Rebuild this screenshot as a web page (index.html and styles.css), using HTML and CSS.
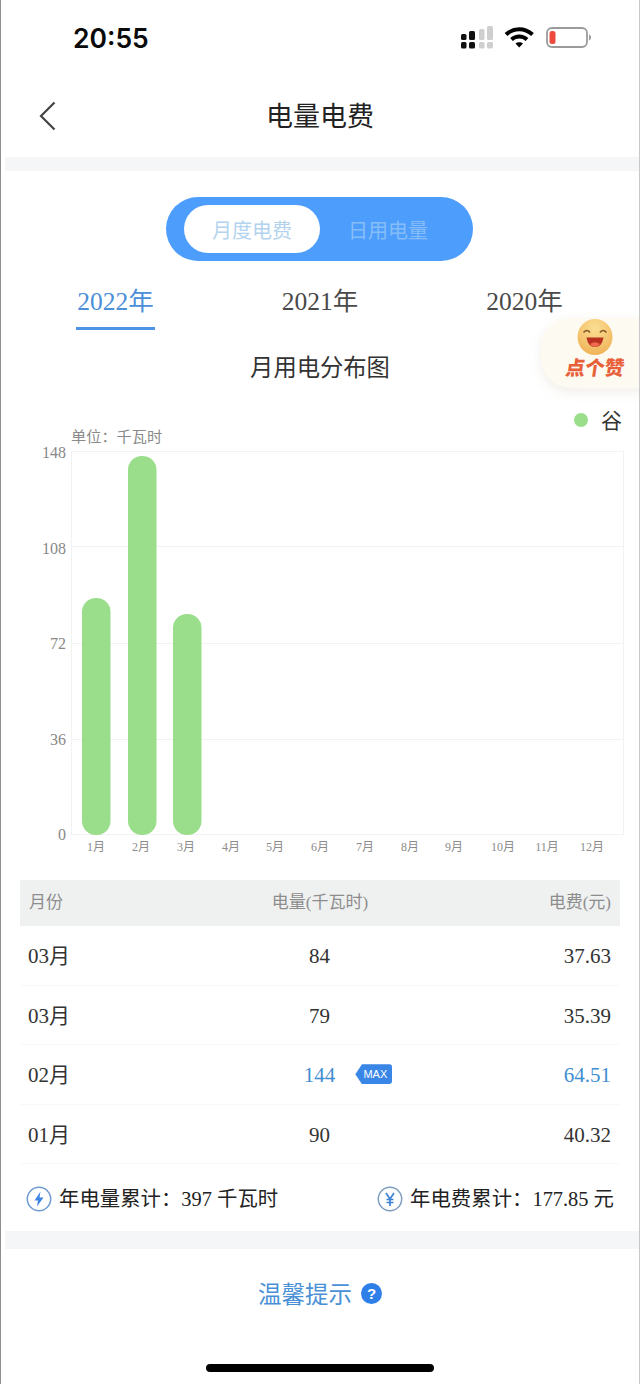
FILE: index.html
```html
<!DOCTYPE html>
<html lang="zh-CN">
<head>
<meta charset="utf-8">
<title>电量电费</title>
<link rel="stylesheet" href="styles.css">
</head>
<body>
<div class="phone">
  <div class="status">
    <span class="time">20:55</span>
    <svg class="status-icons" width="132" height="26" viewBox="0 0 132 26">
      <g fill="#111">
        <rect x="2" y="9" width="5.5" height="6" rx="1.5"/><rect x="2" y="17" width="5.5" height="6.5" rx="1.5"/>
        <rect x="10" y="6" width="6" height="9" rx="1.5"/><rect x="10" y="17" width="6" height="6.5" rx="1.5"/>
      </g>
      <g fill="#cfcfcf">
        <rect x="20" y="4" width="5.5" height="11" rx="1.5"/><rect x="20" y="17" width="5.5" height="6.5" rx="1.5"/>
        <rect x="28" y="1" width="6" height="14" rx="1.5"/><rect x="28" y="17" width="6" height="6.5" rx="1.5"/>
      </g>
      <g fill="none" stroke="#000" stroke-width="4">
        <path d="M47 9.5C55 2.5 65.5 2.500 73.500 9.500"/>
        <path d="M52.500 14.500C57 10.500 63.500 10.500 68 14.500"/>
      </g>
      <path d="M56.500 18.500C58.500 16.700 62 16.700 64 18.500L60.200 22.500Z" fill="#000"/>
      <rect x="88" y="3" width="40" height="19" rx="5" fill="#fff" stroke="#9a9a9a" stroke-width="1.800"/>
      <rect x="90.500" y="6" width="6" height="13" rx="2.500" fill="#ee4b3e"/>
      <path d="M130 9.500C131.500 10 132 11.500 132 12.500S131.500 15 130 15.500Z" fill="#9a9a9a"/>
    </svg>
  </div>

  <header class="nav">
    <svg class="back" width="18" height="30" viewBox="0 0 18 30"><path d="M15.500 1.500L2 15L15.500 28.500" fill="none" stroke="#444" stroke-width="2.200"/></svg>
    <h1 class="nav-title">电量电费</h1>
  </header>

  <div class="band band-top"></div>

  <main class="usage">
    <div class="toggle">
      <span class="toggle-item toggle-on">月度电费</span>
      <span class="toggle-item toggle-off">日用电量</span>
    </div>

    <div class="tabs">
      <span class="tab tab-on">2022年</span>
      <span class="tab">2021年</span>
      <span class="tab">2020年</span>
    </div>

    <h2 class="chart-title">月用电分布图</h2>

    <div class="legend"><i class="legend-dot"></i><span>谷</span></div>

    <svg class="chart" width="640" height="436" viewBox="0 0 640 436">
      <text class="unit" x="71" y="18">单位：千瓦时</text>
      <g class="grid">
        <line x1="71" x2="624" y1="27.500" y2="27.500"/>
        <line x1="71" x2="624" y1="122.500" y2="122.500"/>
        <line x1="71" x2="624" y1="219.500" y2="219.500"/>
        <line x1="71" x2="624" y1="315.500" y2="315.500"/>
        <line x1="71" x2="624" y1="410.500" y2="410.500"/>
        <line x1="71.500" x2="71.500" y1="27" y2="411"/>
        <line x1="623.500" x2="623.500" y1="27" y2="411"/>
      </g>
      <g class="ylabels">
        <text x="66" y="34">148</text>
        <text x="66" y="130">108</text>
        <text x="66" y="225">72</text>
        <text x="66" y="321">36</text>
        <text x="66" y="416">0</text>
      </g>
      <g class="bars">
        <rect x="82" y="174" width="28.500" height="237" rx="14"/>
        <rect x="128" y="32" width="28.500" height="379" rx="14"/>
        <rect x="173" y="190" width="28.500" height="221" rx="14"/>
      </g>
      <g class="xlabels">
        <text x="96" y="427">1月</text><text x="141" y="427">2月</text><text x="186" y="427">3月</text>
        <text x="231" y="427">4月</text><text x="275" y="427">5月</text><text x="320" y="427">6月</text>
        <text x="365" y="427">7月</text><text x="410" y="427">8月</text><text x="454" y="427">9月</text>
        <text x="503" y="427">10月</text><text x="547" y="427">11月</text><text x="592" y="427">12月</text>
      </g>
    </svg>

    <div class="table">
      <div class="row row-head"><span>月份</span><span>电量(千瓦时)</span><span>电费(元)</span></div>
      <div class="row"><span>03月</span><span>84</span><span>37.63</span></div>
      <div class="row"><span>03月</span><span>79</span><span>35.39</span></div>
      <div class="row row-max"><span>02月</span><span class="cell-max"><b class="val">144</b><em class="max">MAX</em></span><span class="val">64.51</span></div>
      <div class="row"><span>01月</span><span>90</span><span>40.32</span></div>
    </div>

    <div class="totals">
      <div class="total">
        <svg width="26" height="26" viewBox="0 0 26 26"><circle cx="13" cy="13" r="11.700" fill="none" stroke="#6d9bd2" stroke-width="1.500"/><path d="M14.500 5.500L8.500 14.500H12L11 20.500L17.500 11.500H13.500Z" fill="#3d85e4"/></svg>
        <span>年电量累计：397 千瓦时</span>
      </div>
      <div class="total">
        <svg width="26" height="26" viewBox="0 0 26 26"><circle cx="13" cy="13" r="11.700" fill="none" stroke="#7e9dc0" stroke-width="1.500"/><path d="M9 7L13 13L17 7M13 13V20M9.500 13.500H16.500M9.500 16.500H16.500" fill="none" stroke="#3f82d2" stroke-width="1.700"/></svg>
        <span>年电费累计：177.85 元</span>
      </div>
    </div>
  </main>

  <div class="band band-bottom"></div>

  <div class="tip">
    <span>温馨提示</span>
    <i class="tip-q">?</i>
  </div>

  <div class="home"></div>

  <aside class="like">
    <svg width="38" height="38" viewBox="0 0 38 38">
      <defs><radialGradient id="face" cx="0.500" cy="0.250" r="0.850"><stop offset="0" stop-color="#fbdf94"/><stop offset="1" stop-color="#efae52"/></radialGradient></defs>
      <ellipse cx="19" cy="19" rx="17.500" ry="18" fill="url(#face)"/>
      <path d="M7.500 14.500Q11 10.500 14 14.500M24 14.500Q27 10.500 30.500 14.500" fill="none" stroke="#8a5a2a" stroke-width="1.600"/>
      <path d="M10.500 19.500H27.500Q26 29 19 29Q12 29 10.500 19.500Z" fill="#b8321f"/>
      <path d="M14 26Q19 22.500 24 26Q22 29 19 29Q16 29 14 26Z" fill="#ef6a4e"/>
    </svg>
    <span class="like-text">点个赞</span>
  </aside>
</div>
</body>
</html>
```
FILE: styles.css
```css
* { box-sizing: border-box; }
html, body { margin: 0; padding: 0; }
body {
  width: 640px;
  height: 1384px;
  overflow: hidden;
  background: #fff;
  font-family: "Liberation Serif", "Noto Sans CJK SC", serif;
  color: #333;
}
i, em, b { font-style: normal; font-weight: 400; }
h1, h2 { margin: 0; font-weight: 400; }

.phone {
  position: relative;
  width: 640px;
  height: 1384px;
  overflow: hidden;
  border-left: 1px solid #8f8f8f;
  border-right: 1px solid #c8c8c8;
}

.status {
  height: 76px;
  display: flex;
  align-items: center;
  justify-content: space-between;
  padding: 0 48px 0 72px;
}
.time {
  font-family: Inter, "Liberation Sans", sans-serif;
  font-size: 26.500px;
  font-weight: 600;
  color: #0a0a0a;
}
.status-icons { margin-top: -1px; display: block; }

.nav {
  position: relative;
  height: 81px;
  display: flex;
  align-items: center;
  justify-content: center;
}
.back { position: absolute; left: 38px; top: 25px; }
.nav-title {
  font-family: "Noto Sans CJK SC", sans-serif;
  font-size: 27px;
  line-height: 36px;
  margin-top: -4px;
  color: #222;
}

.band { background: #f4f6f7; margin-left: 4px; }
.band-top { height: 14px; }
.band-bottom { height: 18px; }

.usage { padding-top: 26px; }

.toggle {
  width: 307px;
  height: 64px;
  margin-left: 165px;
  padding: 8px 17px 8px 18px;
  display: flex;
  align-items: center;
  background: #4d9dfd;
  border-radius: 32px;
}
.toggle-item {
  height: 48px;
  display: flex;
  align-items: center;
  justify-content: center;
  font-family: "Noto Sans CJK SC", sans-serif;
  font-size: 20px;
}
.toggle-on { width: 136px; background: #fff; border-radius: 24px; color: #b3d3ee; }
.toggle-off { width: 136px; color: #86bdf8; }

.tabs {
  display: flex;
  justify-content: space-between;
  margin-top: 22px;
  padding: 0 75px;
}
.tab {
  width: 79px;
  height: 47px;
  padding-top: 1px;
  text-align: center;
  font-size: 25.500px;
  line-height: 36px;
  color: #4a4a4a;
  white-space: nowrap;
}
.tab-on { color: #4a8fd8; border-bottom: 3px solid #4d94e6; }

.chart-title {
  margin-top: 19px;
  text-align: center;
  font-family: "Noto Sans CJK SC", sans-serif;
  font-size: 23.300px;
  line-height: 34px;
  color: #333;
}

.legend {
  height: 24px;
  margin-top: 25px;
  padding-right: 17px;
  display: flex;
  align-items: center;
  justify-content: flex-end;
  gap: 13px;
  font-family: "Noto Sans CJK SC", sans-serif;
  font-size: 21px;
  color: #333;
}
.legend span { line-height: 24px; margin-bottom: 3px; }
.legend-dot { width: 14px; height: 14px; border-radius: 50%; background: #9add8a; }

.chart { display: block; margin: -8px 0 0 -1px; }
.chart text { font-family: "Liberation Serif", "Noto Sans CJK SC", serif; }
.chart .unit { font-family: "Noto Sans CJK SC", sans-serif; font-size: 15.200px; fill: #8a8a8a; }
.grid line { stroke: #f1f3f1; stroke-width: 1; }
.bars rect { fill: #9add8a; }
.chart .ylabels text { font-size: 16px; fill: #888; text-anchor: end; }
.xlabels text { font-size: 12px; fill: #8c8c8c; text-anchor: middle; }

.table { margin: 20px 19px 0 19px; }
.row {
  display: grid;
  grid-template-columns: 1fr 1fr 1fr;
  align-items: center;
  height: 59.500px;
  padding: 2px 9px 0 8px;
  font-size: 21px;
  line-height: 30px;
  color: #333;
  border-bottom: 1px solid #f7f8f8;
}
.row > span { height: 30px; overflow: visible; }
.row span:nth-child(2) { text-align: center; }
.row span:nth-child(3) { text-align: right; }
.row-head {
  height: 46px;
  padding: 0 9px;
  background: #eff1f1;
  border-bottom: 0;
  font-family: "Liberation Serif", "Noto Sans CJK SC", serif;
  font-size: 17px;
  color: #8d8d8d;
}
.val { color: #3f8ecf; }
.cell-max { position: relative; }
.max {
  position: absolute;
  left: 133px;
  top: 4px;
  width: 37px;
  height: 20px;
  display: flex;
  align-items: center;
  justify-content: center;
  padding-left: 3px;
  background: #3a86e6;
  clip-path: polygon(18% 0, 100% 0, 100% 100%, 18% 100%, 0 50%);
  border-radius: 3px;
  font-family: "Liberation Sans", sans-serif;
  font-size: 11px;
  color: #fff;
}

.totals {
  display: flex;
  justify-content: space-between;
  align-items: center;
  height: 67px;
  padding: 3px 25px 0;
}
.total {
  display: flex;
  align-items: center;
  gap: 7px;
  font-size: 20.400px;
  line-height: 28px;
  color: #222;
  white-space: nowrap;
}
.total svg { display: block; flex: none; }

.tip {
  height: 90px;
  display: flex;
  align-items: center;
  justify-content: center;
  gap: 9px;
  padding-bottom: 2px;
  font-family: "Noto Sans CJK SC", sans-serif;
  font-size: 23.500px;
  color: #4a90d6;
}
.tip-q {
  width: 21px;
  height: 21px;
  border-radius: 50%;
  display: flex;
  align-items: center;
  justify-content: center;
  background: #2f7fe8;
  font-family: "Liberation Sans", sans-serif;
  font-size: 15px;
  font-weight: 700;
  color: #fff;
}

.home {
  width: 228px;
  height: 8px;
  margin: 25px 0 0 205px;
  border-radius: 4px;
  background: #000;
}

.like {
  position: absolute;
  left: 540px;
  top: 318px;
  width: 110px;
  height: 70px;
  padding-left: 25px;
  border-radius: 30px 0 0 30px;
  background: #fdfaf2;
  box-shadow: 0 4px 12px rgba(200, 190, 170, .25);
  display: flex;
  flex-direction: column;
  align-items: flex-start;
}
.like svg { display: block; margin-left: 10px; }
.like-text {
  margin-top: -1px;
  font-family: "Noto Sans CJK SC", sans-serif;
  font-size: 19.500px;
  line-height: 23px;
  font-weight: 900;
  color: #e8603a;
  white-space: nowrap;
  transform: skewX(-8deg);
}
```
